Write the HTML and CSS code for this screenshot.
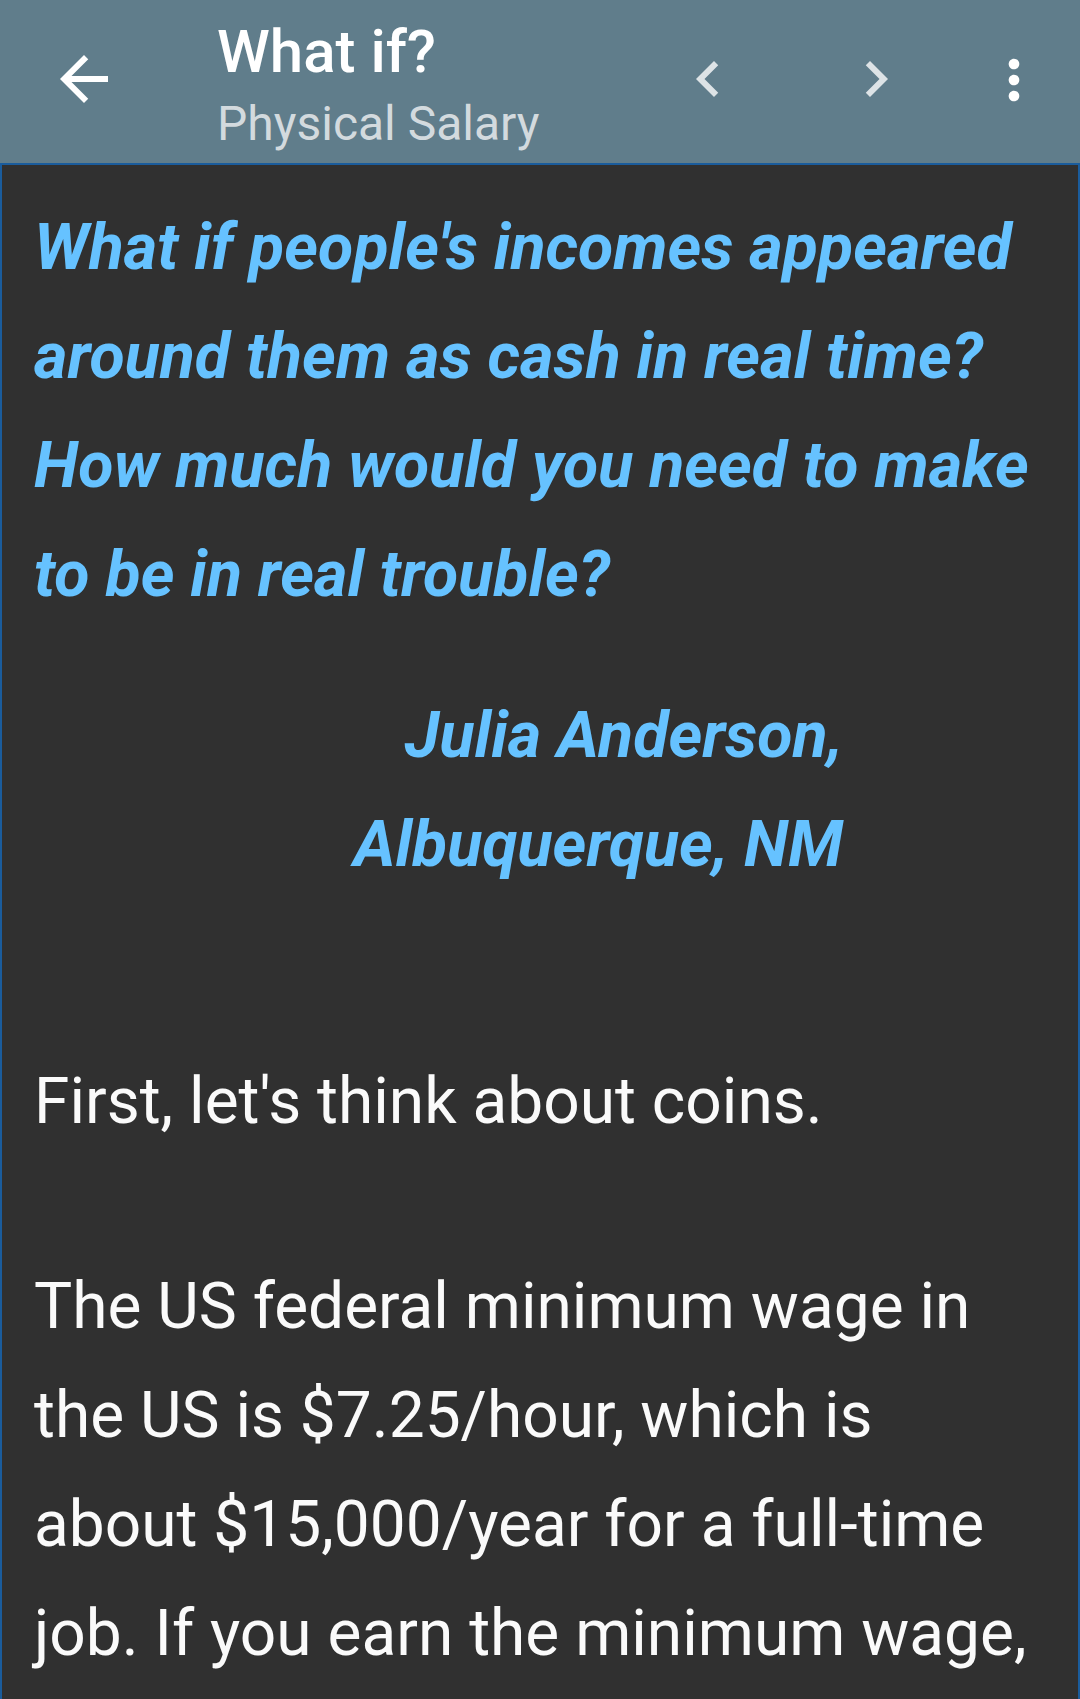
FILE: index.html
```html
<!DOCTYPE html>
<html lang="en">
<head>
<meta charset="utf-8">
<title>What if? - Physical Salary</title>
<link rel="stylesheet" href="styles.css">
</head>
<body>
<header class="toolbar">
  <div class="nav-btn back">
    <svg class="icon" viewBox="0 0 24 24"><path d="M20 11H7.83l5.59-5.59L12 4l-8 8 8 8 1.41-1.41L7.83 13H20v-2z" fill="#ffffff"/></svg>
  </div>
  <div class="titles">
    <div class="title">What if?</div>
    <div class="subtitle">Physical Salary</div>
  </div>
  <div class="nav-btn prev">
    <svg class="icon" viewBox="0 0 24 24"><path d="M15.41 7.41L14 6l-6 6 6 6 1.41-1.41L10.83 12z" fill="#dde3e6"/></svg>
  </div>
  <div class="nav-btn next">
    <svg class="icon" viewBox="0 0 24 24"><path d="M8.59 16.59L10 18l6-6-6-6-1.41 1.41L13.17 12z" fill="#dde3e6"/></svg>
  </div>
  <div class="nav-btn more">
    <svg class="icon dots" viewBox="0 0 24 24"><path d="M12 8c1.1 0 2-.9 2-2s-.9-2-2-2-2 .9-2 2 .9 2 2 2zm0 2c-1.1 0-2 .9-2 2s.9 2 2 2 2-.9 2-2-.9-2-2-2zm0 6c-1.1 0-2 .9-2 2s.9 2 2 2 2-.9 2-2-.9-2-2-2z" fill="#ffffff"/></svg>
  </div>
</header>
<main class="article">
  <p class="question">What if people's incomes appeared around them as cash in real time? How much would you need to make to be in real trouble?</p>
  <p class="attribution">Julia Anderson,<br>Albuquerque, NM</p>
  <p class="body first">First, let's think about coins.</p>
  <p class="body">The US federal minimum wage in the US is $7.25/hour, which is about $15,000/year for a full-time job. If you earn the minimum wage,</p>
</main>
</body>
</html>
```

FILE: styles.css
```css
html, body {
  margin: 0;
  padding: 0;
}

body {
  background: #303030;
  width: 1080px;
  height: 1699px;
  overflow: hidden;
  font-family: Roboto, "Noto Sans", "Liberation Sans", sans-serif;
}

.toolbar {
  height: 163px;
  background: #607d8b;
  display: flex;
  align-items: center;
  box-sizing: border-box;
  padding-right: 12px;
}

.nav-btn {
  width: 168px;
  height: 163px;
  display: flex;
  align-items: center;
  justify-content: center;
  flex: none;
}

.nav-btn.back {
  width: 168px;
  margin-top: -6px;
}

.nav-btn.prev,
.nav-btn.next {
  margin-top: -6px;
}

.nav-btn.more {
  width: 108px;
  margin-top: -3px;
}

.icon {
  width: 72px;
  height: 72px;
  display: block;
}

.icon.dots {
  width: 64px;
  height: 64px;
}

.titles {
  flex: 1;
  align-self: flex-start;
  display: flex;
  flex-direction: column;
  padding-left: 49px;
  padding-top: 17px;
}

.title {
  color: #ffffff;
  font-size: 60px;
  font-weight: 500;
  line-height: 70px;
}

.subtitle {
  color: #d3dade;
  font-size: 48px;
  font-weight: 400;
  line-height: 60px;
  margin-top: 7px;
}

.article {
  border: 2px solid #1a5c9c;
  border-bottom: none;
  min-height: 1600px;
  padding: 28px 32px 0 32px;
}

.article p {
  margin: 0;
  font-size: 64px;
  line-height: 109px;
}

.article p.question,
.article p.attribution {
  font-size: 64.5px;
}

.question {
  color: #66c2ff;
  font-style: italic;
  font-weight: 700;
}

.attribution {
  color: #66c2ff;
  font-style: italic;
  font-weight: 700;
  text-align: right;
  margin-top: 52px !important;
  margin-right: 203px !important;
}

.body {
  color: #fafafa;
  font-weight: 400;
  margin-top: 96px !important;
}

.body.first {
  margin-top: 148px !important;
}
```
